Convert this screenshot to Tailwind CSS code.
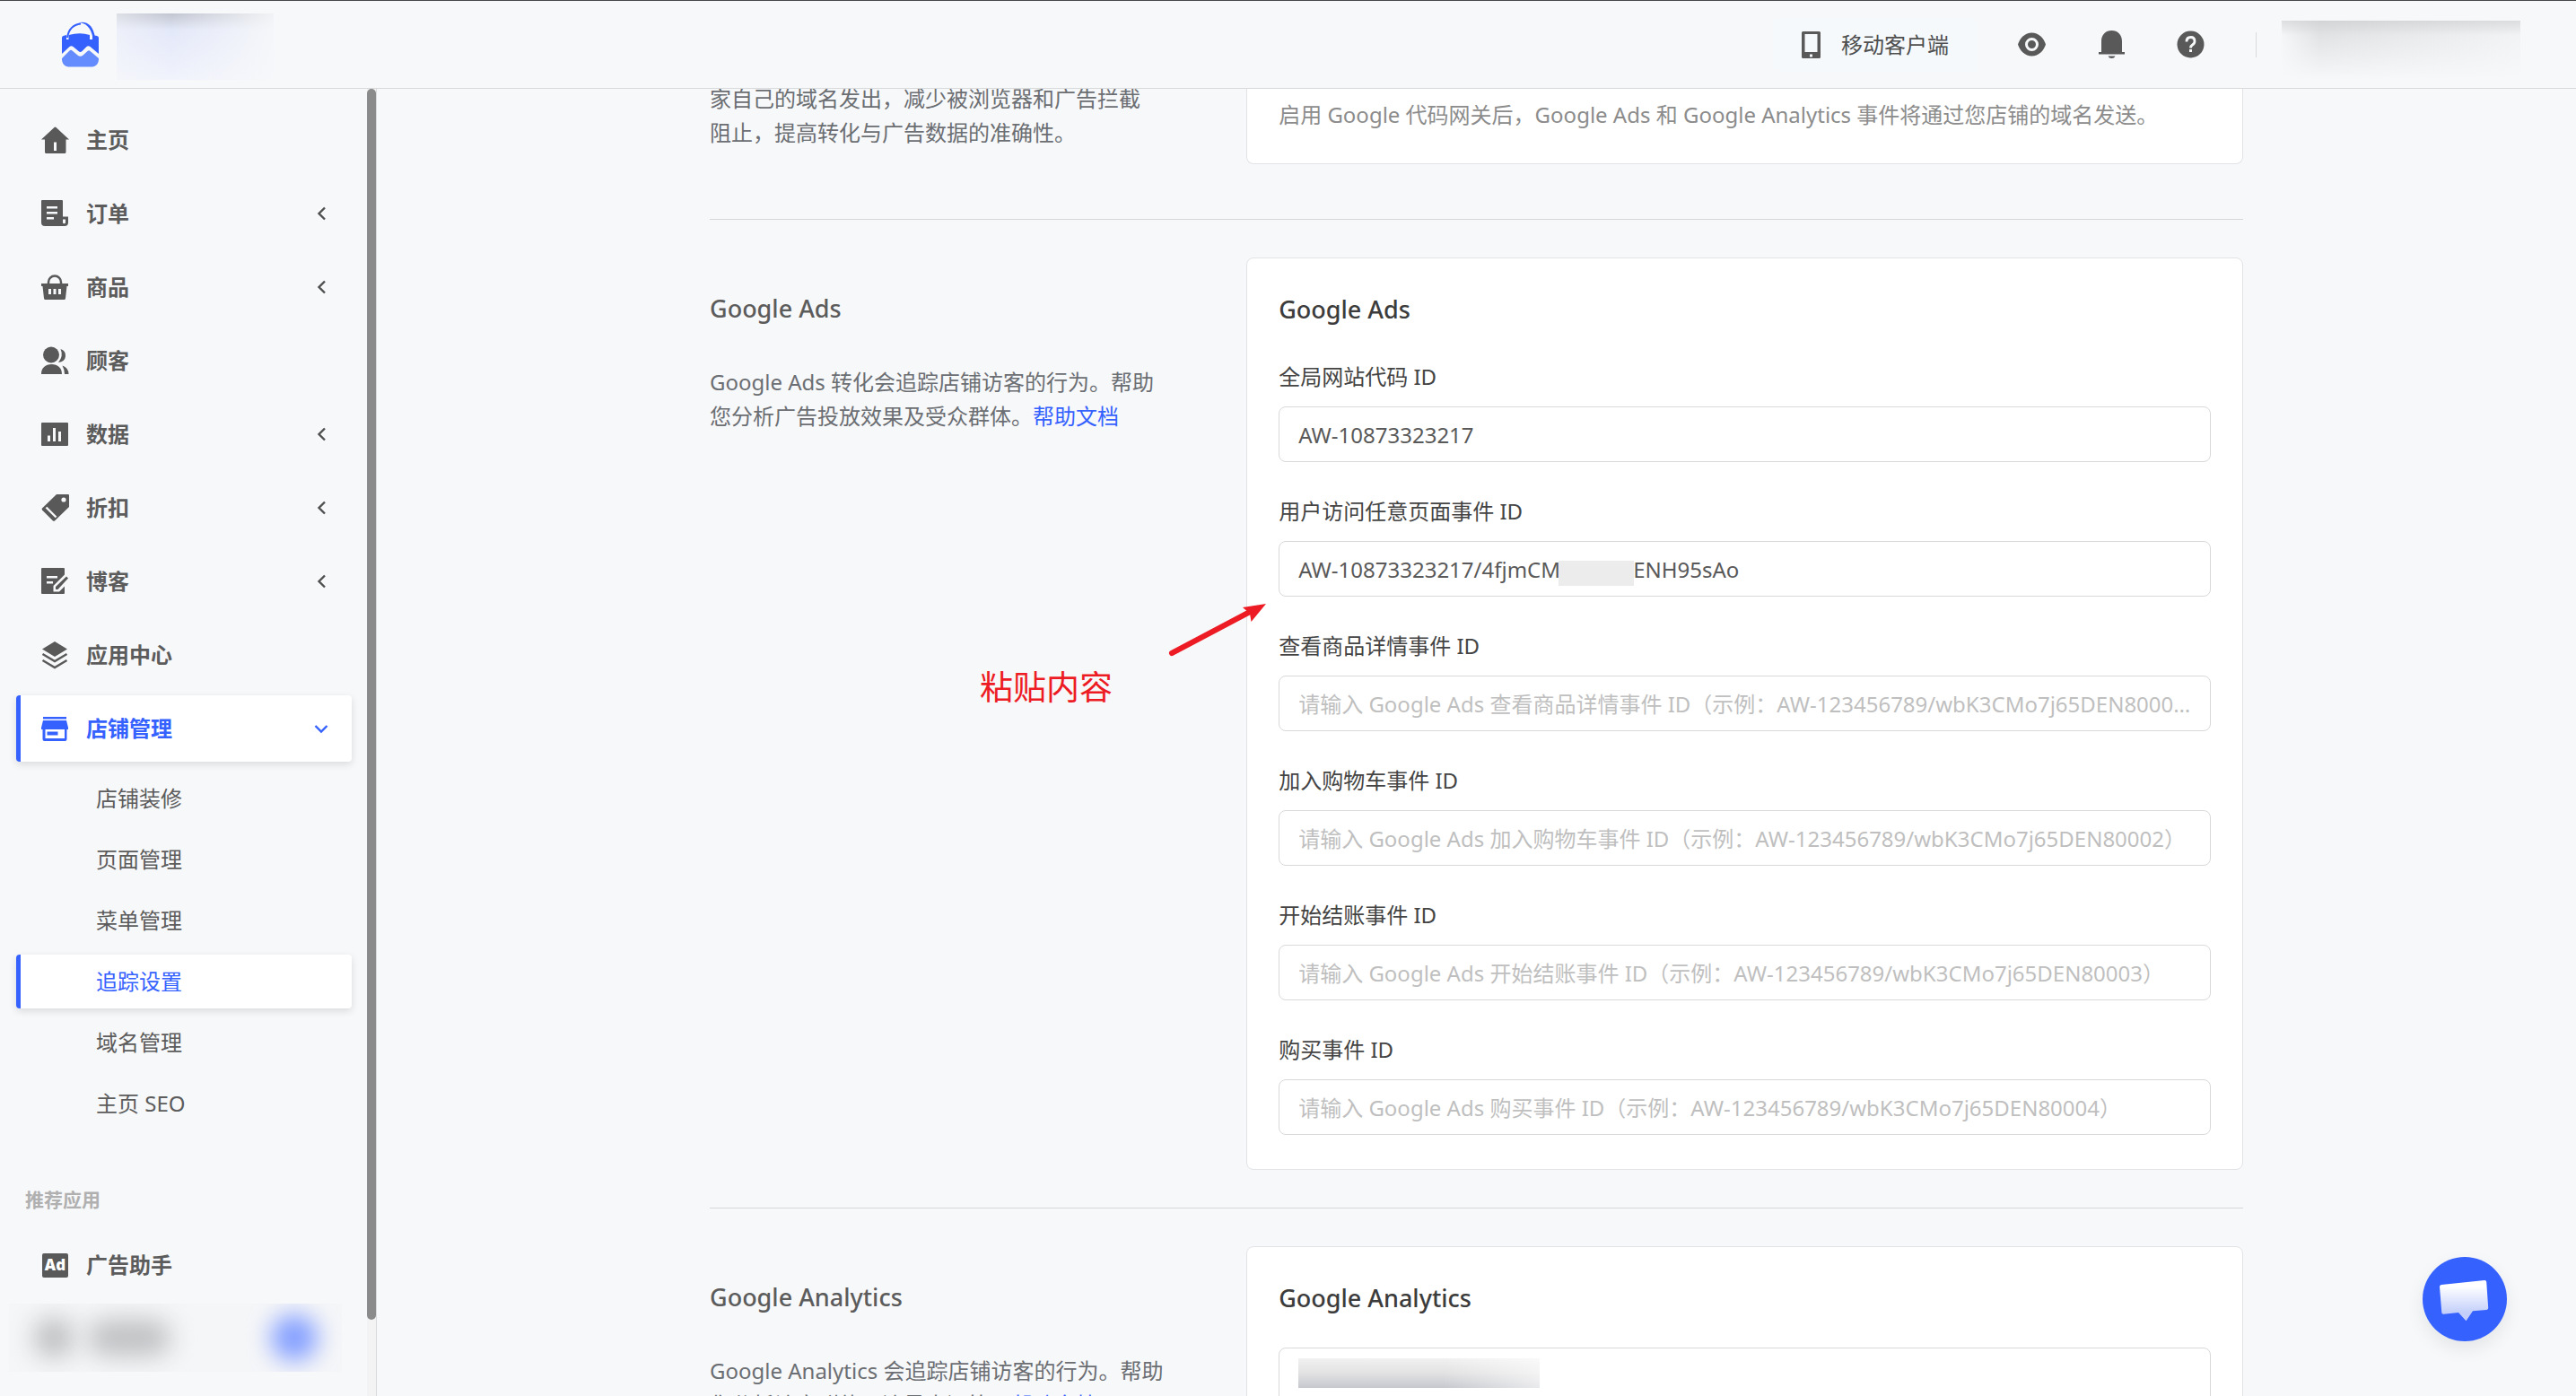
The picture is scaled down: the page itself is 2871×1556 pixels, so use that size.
<!DOCTYPE html>
<html lang="zh-CN">

<head>
    <meta charset="UTF-8">
    <meta name="viewport" content="width=device-width, initial-scale=1.0">
    <title>追踪设置</title>
    <script src="https://cdn.jsdelivr.net/npm/@tailwindcss/browser@4"></script>
</head>

<body class="flex h-screen flex-col overflow-hidden bg-[#f7f8fa] font-['Noto_Sans','Noto_Sans_CJK_SC',sans-serif] text-[24px] leading-[38px] text-[#5c5c5c]">

    <!-- Header -->
    <header class="flex h-[99px] shrink-0 items-center justify-between border-t border-b border-t-[#47474a] border-b-[#d7d9db] pr-[62px] pl-[69px]">
        <a href="#" aria-label="首页" class="flex items-center gap-5">
            <svg class="h-[52px] w-[41px]" viewBox="0 0 41 52">
                <path fill="#3561ff" d="M0 18q0-1.500 1.500-2L5 15v5h2.500v-5q13-3.500 23.500 0v5h3V15l5 1q2 .5 2 2v18L31.500 28q-2-1.500-4 0l-5 5q-2 2-4 0l-6-5q-2-1.500-4 0L0 36z" />
                <path fill="none" stroke="#3561ff" stroke-width="2" d="M6 18Q8 4 21 2.500" />
                <path fill="#3561ff" d="M18 1.200Q34-2 37 18h-2.500Q31 1 18 1.200z" />
                <path fill="#658cff" d="M0 41L8.500 32.500q1.500-1.300 3 0l6 5q3 2.500 6 0l5-4.500q1.500-1.500 3 0L41 41v2q-1 7-7 7.500H7Q1 50 0 43z" />
            </svg>
            <span class="mt-1 flex h-[74px] w-[175px] bg-linear-to-b from-[#c1c5d0] via-[#e3e8f9] via-25% to-[#f1f3fc]">
                <span class="flex-1 bg-linear-to-r from-[#f7f8fa]/50 via-transparent via-35% to-[#f7f8fa]/90"></span>
            </span>
        </a>
        <div class="flex items-center">
            <button type="button" class="flex h-[58px] items-center gap-[23px] rounded bg-[#f5f9fc] px-8 text-[#4f4f4f]">
                <svg class="h-[30px] w-[21px]" viewBox="0 0 21 30">
                    <path fill="#595959" fill-rule="evenodd" d="M1.500 0h18q1.500 0 1.500 1.500v27q0 1.500-1.500 1.500h-18Q0 30 0 28.500v-27Q0 0 1.500 0zM3.500 3v20h14V3zM9 25.500v3h3v-3z" />
                </svg>
                移动客户端
            </button>
            <button type="button" aria-label="预览" class="ml-[45px]">
                <svg class="size-[31px]" viewBox="0 0 31 31">
                    <path fill="#595959" d="M15.500 2.500C23 2.500 28.500 8 31 15.500 28.500 23 23 28.500 15.500 28.500S2.500 23 0 15.500C2.500 8 8 2.500 15.500 2.500z" />
                    <circle cx="15.500" cy="15.500" r="6" fill="none" stroke="#f7f8fa" stroke-width="3" />
                </svg>
            </button>
            <button type="button" aria-label="通知" class="ml-[58px]">
                <svg class="size-[31px]" viewBox="0 0 31 31" fill="#595959">
                    <path d="M15.500 0C22 0 27 4.500 27 12v12h3v2.500H1V24h3V12C4 4.500 9 0 15.500 0zM11.500 28.500h8q-1 2.500-4 2.500t-4-2.500z" />
                </svg>
            </button>
            <button type="button" aria-label="帮助" class="ml-[57px]">
                <svg class="size-[31px]" viewBox="0 0 31 31">
                    <circle cx="15.500" cy="15.500" r="15" fill="#595959" />
                    <path fill="none" stroke="#f7f8fa" stroke-width="2.800" d="M11 12.500q0-5 4.500-5t4.500 4.500q0 2.500-2.500 4-2 1.300-2 3.500" />
                    <rect x="14" y="21" width="3" height="3" fill="#f7f8fa" />
                </svg>
            </button>
            <span class="ml-[57px] h-7 w-px bg-[#d9dbde]"></span>
            <span class="mt-3 ml-7 flex h-[66px] w-[266px] bg-linear-to-r from-[#f4f5f6] via-[#d3d4d6] via-16% to-[#eff0f2]">
                <span class="flex-1 bg-linear-to-b from-[#d3d4d6]/70 via-[#f7f8fa]/40 via-25% to-[#f7f8fa]"></span>
            </span>
        </div>
    </header>

    <div class="flex min-h-0 flex-1">

        <!-- Sidebar -->
        <aside class="flex w-[420px] shrink-0 border-r border-[#d9dadb]">
            <nav class="flex min-w-0 flex-1 flex-col pt-5 pr-[17px] pl-[18px] font-semibold whitespace-nowrap">
                <div class="flex flex-col gap-2">
                    <a href="#" class="flex h-[74px] items-center gap-[18px] pr-6 pl-7">
                        <svg class="size-8" viewBox="0 0 32 32" fill="#595959">
                            <path fill-rule="evenodd" d="M14.500 2q1-.8 2 0L31 15.500H27.500V29.500q0 1.500-1.500 1.500H5.500Q4 31 4 29.500V15.500H0zM14 18.500v9.500h3v-9.500z" />
                        </svg>
                        <span class="flex-1">主页</span>
                    </a>
                    <a href="#" class="flex h-[74px] items-center gap-[18px] pr-6 pl-7">
                        <svg class="size-8" viewBox="0 0 32 32" fill="#595959">
                            <path fill-rule="evenodd" d="M1 1h22q1 0 1 1v17.500h6V26q0 4-4 4H4q-4 0-4-4V2q0-1 1-1zM6 8v2.500h12V8zm0 6v2.500h12V14zm0 6v2.500h8V20zm18 2.500v4q1.500 1.500 3 0v-4z" />
                        </svg>
                        <span class="flex-1">订单</span>
                        <svg class="size-5" viewBox="0 0 20 20" fill="none" stroke="#4f4f4f" stroke-width="2.400"><path d="M14 3.500L7.500 10l6.500 6.500" /></svg>
                    </a>
                    <a href="#" class="flex h-[74px] items-center gap-[18px] pr-6 pl-7">
                        <svg class="size-8" viewBox="0 0 32 32" fill="#595959">
                            <path fill="none" stroke="#595959" stroke-width="2.500" d="M8 13V10.500a7 7 0 0 1 14 0V13" />
                            <path fill-rule="evenodd" d="M0 12h30v3h-1.500L27 28.500q-.2 1.500-1.500 1.500h-21Q3.200 30 3 28.500L1.500 15H0zM8 18v6h3v-6zm5.500 0v6h3v-6zm5.500 0v6h3v-6z" />
                        </svg>
                        <span class="flex-1">商品</span>
                        <svg class="size-5" viewBox="0 0 20 20" fill="none" stroke="#4f4f4f" stroke-width="2.400"><path d="M14 3.500L7.500 10l6.500 6.500" /></svg>
                    </a>
                    <a href="#" class="flex h-[74px] items-center gap-[18px] pr-6 pl-7">
                        <svg class="size-8" viewBox="0 0 32 32" fill="#595959">
                            <circle cx="11" cy="9.500" r="9" />
                            <path d="M0 31C0 24 4.500 20 11.500 20S23 24 23 31zM21.500 3q6 2 5.500 8-.5 6-8 7 6-7 2.500-15zM23.500 21.500Q30.500 24 30.500 31H26q0-5-2.500-9.500z" />
                        </svg>
                        <span class="flex-1">顾客</span>
                    </a>
                    <a href="#" class="flex h-[74px] items-center gap-[18px] pr-6 pl-7">
                        <svg class="size-8" viewBox="0 0 32 32" fill="#595959">
                            <path fill-rule="evenodd" d="M1 3h28q1 0 1 1v24q0 1-1 1H1q-1 0-1-1V4q0-1 1-1zM7 17.500V24h3v-6.500zM13 9v15h3V9zm6 4v11h3V13z" />
                        </svg>
                        <span class="flex-1">数据</span>
                        <svg class="size-5" viewBox="0 0 20 20" fill="none" stroke="#4f4f4f" stroke-width="2.400"><path d="M14 3.500L7.500 10l6.500 6.500" /></svg>
                    </a>
                    <a href="#" class="flex h-[74px] items-center gap-[18px] pr-6 pl-7">
                        <svg class="size-8" viewBox="0 0 32 32" fill="#595959">
                            <path d="M17 1h13q1 0 1 1v13L15 30.500q-1 .8-2 0L1 18.500q-.8-1 0-2z" />
                            <circle cx="25" cy="7" r="2.600" fill="#f7f8fa" />
                            <path stroke="#f7f8fa" stroke-width="2.400" d="M5.500 15.500l11 11" />
                        </svg>
                        <span class="flex-1">折扣</span>
                        <svg class="size-5" viewBox="0 0 20 20" fill="none" stroke="#4f4f4f" stroke-width="2.400"><path d="M14 3.500L7.500 10l6.500 6.500" /></svg>
                    </a>
                    <a href="#" class="flex h-[74px] items-center gap-[18px] pr-6 pl-7">
                        <svg class="size-8" viewBox="0 0 32 32" fill="#595959">
                            <path fill-rule="evenodd" d="M1 1h24q1 0 1 1v6.500L13.500 21v6.500H20l6-6V29q0 1-1 1H1q-1 0-1-1V2q0-1 1-1zM6 10v2.500h12V10zm0 6v2.500h7V16z" />
                            <path d="M16 22L28 10.500l2 2L18.500 25H16z" />
                        </svg>
                        <span class="flex-1">博客</span>
                        <svg class="size-5" viewBox="0 0 20 20" fill="none" stroke="#4f4f4f" stroke-width="2.400"><path d="M14 3.500L7.500 10l6.500 6.500" /></svg>
                    </a>
                    <a href="#" class="flex h-[74px] items-center gap-[18px] pr-6 pl-7">
                        <svg class="size-8" viewBox="0 0 32 32" fill="#595959">
                            <path d="M15 1l14 8.500L15 18 1 9.500z" />
                            <path fill="none" stroke="#595959" stroke-width="2.400" d="M1.500 15L15 23l13.500-8M1.500 22L15 30l13.500-8" />
                        </svg>
                        <span class="flex-1">应用中心</span>
                    </a>
                    <a href="#" class="flex h-[74px] items-center gap-[18px] rounded border-l-5 border-[#3561ff] bg-white pr-6 pl-[23px] text-[#3561ff] shadow-[0_3px_8px_rgba(0,0,0,0.12)]">
                        <svg class="size-8" viewBox="0 0 32 32" fill="#3561ff">
                            <path fill-rule="evenodd" d="M2 3h26v2.500H2zM2 7h26l2 8v2h-1.500v11q0 2-2 2h-23q-2 0-2-2V17H0v-2zM4.500 17v10H26V17z" />
                            <rect x="6.500" y="19.500" width="12" height="4" />
                        </svg>
                        <span class="flex-1">店铺管理</span>
                        <svg class="size-5" viewBox="0 0 20 20" fill="none" stroke="#3561ff" stroke-width="2.400"><path d="M3.500 7L10 13.500 16.500 7" /></svg>
                    </a>
                </div>

                <div class="mt-[11px] flex flex-col gap-2 font-normal">
                    <a href="#" class="flex h-[60px] items-center pl-[89px]">店铺装修</a>
                    <a href="#" class="flex h-[60px] items-center pl-[89px]">页面管理</a>
                    <a href="#" class="flex h-[60px] items-center pl-[89px]">菜单管理</a>
                    <a href="#" class="flex h-[60px] items-center rounded border-l-5 border-[#3561ff] bg-white pl-[84px] text-[#3561ff] shadow-[0_3px_8px_rgba(0,0,0,0.12)]">追踪设置</a>
                    <a href="#" class="flex h-[60px] items-center pl-[89px]">域名管理</a>
                    <a href="#" class="flex h-[60px] items-center pl-[89px]">主页 SEO</a>
                </div>

                <h2 class="mt-[58px] pl-[10px] text-[21px] text-[#b0b0b0]">推荐应用</h2>
                <a href="#" class="mt-[17px] flex h-[74px] items-center gap-5 pl-[29px]">
                    <span class="flex h-[27px] w-[29px] items-center justify-center rounded-[2px] bg-[#595959] text-[17px] font-black text-white">Ad</span>
                    <span>广告助手</span>
                </a>
                <div class="mt-[6px] -ml-2 flex h-[76px] w-[371px] shrink-0 items-center overflow-hidden bg-[#f5f6f8] pl-7">
                    <span class="size-11 rounded-full bg-[#bbbcbe] blur-[14px]"></span>
                    <span class="ml-4 h-10 w-[92px] rounded-full bg-[#bfc0c2] blur-[14px]"></span>
                    <span class="ml-[112px] size-13 rounded-full bg-[#849fff] blur-[13px]"></span>
                </div>
            </nav>
            <div class="w-[10px] bg-[#f3f3f3]">
                <div class="h-[94.200%] rounded-full bg-[#8b8b8b]"></div>
            </div>
        </aside>

        <!-- Settings -->
        <main class="min-w-0 flex-1 overflow-hidden">
            <div class="mx-auto max-w-[1709px]">

                <section class="grid grid-cols-[35%_65%] border-b border-[#d5d8db] pb-[61px]">
                    <p class="-mt-2 whitespace-nowrap text-[#6b6e72]">家自己的域名发出，减少被浏览器和广告拦截<br>阻止，提高转化与广告数据的准确性。</p>
                    <div class="rounded-b-lg border border-t-0 border-[#e1e3e6] bg-white px-[35px] pt-[10px] pb-[35px] text-[#8c8c8c]">
                        <p>启用 Google 代码网关后，Google Ads 和 Google Analytics 事件将通过您店铺的域名发送。</p>
                    </div>
                </section>

                <section class="relative grid grid-cols-[35%_65%] border-b border-[#d5d8db] pt-[42px] pb-[42px]">
                    <div class="pt-[38px]">
                        <h2 class="text-[27px] font-medium">Google Ads</h2>
                        <p class="mt-[44px] whitespace-nowrap text-[#6b6e72]">Google Ads 转化会追踪店铺访客的行为。帮助<br>您分析广告投放效果及受众群体。<a href="#" class="text-[#3561ff]">帮助文档</a></p>
                    </div>
                    <div class="rounded-lg border border-[#e1e3e6] bg-white px-[35px] pt-[38px] pb-[38px]">
                        <h3 class="text-[27px] font-medium text-[#3c3c3c]">Google Ads</h3>
                        <form class="mt-[37px] flex flex-col gap-9 text-[#444]">
                            <div>
                                <label for="global-id" class="block">全局网站代码 ID</label>
                                <input id="global-id" type="text" value="AW-10873323217" class="mt-[14px] block h-[62px] w-full rounded-lg border border-[#d9d9d9] px-[21px] text-[#595959]">
                            </div>
                            <div class="relative">
                                <label for="visit-id" class="block">用户访问任意页面事件 ID</label>
                                <input id="visit-id" type="text" value="AW-10873323217/4fjmCM             ENH95sAo" class="mt-[14px] block h-[62px] w-full rounded-lg border border-[#d9d9d9] px-[21px] text-[#595959]">
                                <span class="absolute top-[74px] left-[312px] h-7 w-[84px] bg-[#ececec]"></span>
                            </div>
                            <div>
                                <label for="view-id" class="block">查看商品详情事件 ID</label>
                                <input id="view-id" type="text" placeholder="请输入 Google Ads 查看商品详情事件 ID（示例：AW-123456789/wbK3CMo7j65DEN80001）" class="mt-[14px] block h-[62px] w-full rounded-lg border border-[#d9d9d9] px-[21px] text-ellipsis placeholder:text-[#bfbfbf]">
                            </div>
                            <div>
                                <label for="cart-id" class="block">加入购物车事件 ID</label>
                                <input id="cart-id" type="text" placeholder="请输入 Google Ads 加入购物车事件 ID（示例：AW-123456789/wbK3CMo7j65DEN80002）" class="mt-[14px] block h-[62px] w-full rounded-lg border border-[#d9d9d9] px-[21px] text-ellipsis placeholder:text-[#bfbfbf]">
                            </div>
                            <div>
                                <label for="checkout-id" class="block">开始结账事件 ID</label>
                                <input id="checkout-id" type="text" placeholder="请输入 Google Ads 开始结账事件 ID（示例：AW-123456789/wbK3CMo7j65DEN80003）" class="mt-[14px] block h-[62px] w-full rounded-lg border border-[#d9d9d9] px-[21px] text-ellipsis placeholder:text-[#bfbfbf]">
                            </div>
                            <div>
                                <label for="purchase-id" class="block">购买事件 ID</label>
                                <input id="purchase-id" type="text" placeholder="请输入 Google Ads 购买事件 ID（示例：AW-123456789/wbK3CMo7j65DEN80004）" class="mt-[14px] block h-[62px] w-full rounded-lg border border-[#d9d9d9] px-[21px] text-ellipsis placeholder:text-[#bfbfbf]">
                            </div>
                        </form>
                    </div>

                    <!-- Callout -->
                    <span class="absolute top-[502px] left-[301px] text-[37px] text-[#ed1c24]">粘贴内容</span>
                    <svg class="absolute top-[423px] left-[508px] h-[68px] w-[116px]" viewBox="0 0 116 68" fill="#ed1c24">
                        <path stroke="#ed1c24" stroke-width="6" stroke-linecap="round" d="M7 60L94 14" />
                        <path d="M112 5L95.500 25l-1.500-9-8-7z" />
                    </svg>
                </section>

                <section class="grid grid-cols-[35%_65%] pt-[42px]">
                    <div class="pt-[38px]">
                        <h2 class="text-[27px] font-medium">Google Analytics</h2>
                        <p class="mt-[44px] whitespace-nowrap text-[#6b6e72]">Google Analytics 会追踪店铺访客的行为。帮助<br>您分析访客群体，流量来源等。<a href="#" class="text-[#3561ff]">帮助文档</a></p>
                    </div>
                    <div class="rounded-lg border border-[#e1e3e6] bg-white px-[35px] pt-[38px] pb-9">
                        <h3 class="text-[27px] font-medium text-[#3c3c3c]">Google Analytics</h3>
                        <div class="relative mt-9">
                            <input type="text" aria-label="Google Analytics ID" class="block h-[62px] w-full rounded-lg border border-[#d9d9d9] px-[21px]">
                            <span class="absolute top-[12px] left-[22px] flex h-[33px] w-[269px] bg-linear-to-b from-[#f1f1f1] via-[#e2e2e3] to-[#c6c8ce]">
                                <span class="flex-1 bg-linear-to-r from-transparent via-transparent via-60% to-white/60"></span>
                            </span>
                        </div>
                    </div>
                </section>
            </div>
        </main>
    </div>

    <!-- Chat -->
    <button type="button" aria-label="在线客服" class="fixed right-[77px] bottom-[61px] size-[94px] rounded-full bg-[#3561ff] shadow-[0_8px_20px_rgba(0,0,0,0.08)]">
        <svg class="size-full" viewBox="0 0 94 94">
            <defs>
                <linearGradient id="bubble" x1="0" y1="0" x2="0" y2="1">
                    <stop offset="0.150" stop-color="#fff" />
                    <stop offset="0.800" stop-color="#c3cffa" />
                </linearGradient>
            </defs>
            <path fill="url(#bubble)" d="M21 31l48-5q2-.2 2.200 1.800l2 29q.1 2-1.900 2.200L56 60.300l-7.500 11L40 62l-16.500 1.700q-2 .2-2.200-1.700L19 33.200q-.1-2 2-2.200z" />
        </svg>
    </button>

</body>

</html>
